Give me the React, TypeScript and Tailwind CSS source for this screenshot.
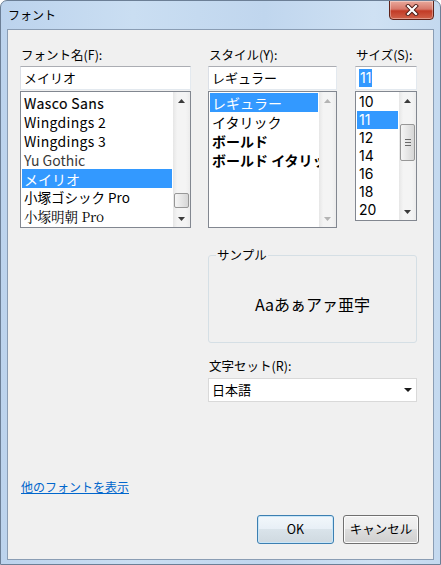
import React from "react";

function Arrow({ dir, disabled }: { dir: "up" | "down"; disabled?: boolean }) {
  const fill = disabled ? "#b4b4b4" : "#3b3b3b";
  return (
    <svg width="7" height="4" viewBox="0 0 7 4">
      {dir === "up" ? (
        <polygon points="3.5,0 7,4 0,4" fill={fill} />
      ) : (
        <polygon points="0,0 7,0 3.5,4" fill={fill} />
      )}
    </svg>
  );
}

function ScrollBar({
  thumbTop,
  thumbHeight,
  grip,
  disabled,
}: {
  thumbTop?: number;
  thumbHeight?: number;
  grip?: boolean;
  disabled?: boolean;
}) {
  return (
    <div className="relative w-[17px] shrink-0 flex flex-col bg-[linear-gradient(to_right,#e6e6e6,#f4f4f4_25%,#f4f4f4_75%,#ececec)]">
      <div className="h-[17px] flex items-center justify-center">
        <Arrow dir="up" disabled={disabled} />
      </div>
      <div className="flex-1" />
      <div className="h-[17px] flex items-center justify-center">
        <Arrow dir="down" disabled={disabled} />
      </div>
      {thumbHeight ? (
        <div
          className="absolute left-[1px] right-[1px] rounded-[2px] border border-[#979797] bg-[linear-gradient(to_right,#f5f5f5,#e6e6e6_50%,#d6d6d6)] flex flex-col items-center justify-center gap-[2px]"
          style={{ top: thumbTop, height: thumbHeight }}
        >
          {grip && (
            <>
              <div className="w-[6px] h-px bg-[#6a6a6a]" />
              <div className="w-[6px] h-px bg-[#6a6a6a]" />
              <div className="w-[6px] h-px bg-[#6a6a6a]" />
            </>
          )}
        </div>
      ) : null}
    </div>
  );
}

type Row = { text: string; cls?: string; sel?: boolean };

function ListBox({
  rows,
  rowH,
  height,
  children,
}: {
  rows: Row[];
  rowH: string;
  height: string;
  children: React.ReactNode;
}) {
  return (
    <div className={`mt-px ${height} border border-[#828790] bg-white flex`}>
      <div className="flex-1 min-w-0 overflow-hidden p-px">
        {rows.map((r) => (
          <div
            key={r.text}
            className={`${rowH} pl-[2px] flex items-center whitespace-nowrap leading-none ${
              r.sel ? "bg-[#3399ff] text-white" : "text-black"
            } ${r.cls ?? "text-[13px]"}`}
          >
            {r.text}
          </div>
        ))}
      </div>
      {children}
    </div>
  );
}

function TextBox({ value, selected }: { value: string; selected?: boolean }) {
  return (
    <div className="h-[24px] border border-[#abadb3] border-l-[#dbdfe6] border-r-[#e3e9ef] border-b-[#e3e9ef] bg-white flex items-center pl-[3px] text-[13px]">
      {selected ? (
        <span className="bg-[#3399ff] text-white px-px leading-[18px] text-[14px] font-['Inter',sans-serif]">{value}</span>
      ) : (
        <span>{value}</span>
      )}
    </div>
  );
}

function Label({ children }: { children: React.ReactNode }) {
  return <div className="text-[12.5px] leading-[16px] text-black pl-px">{children}</div>;
}

const num = "text-[14px] font-['Inter',sans-serif]";

export default function App() {
  return (
    <div className="w-[441px] h-[565px] flex flex-col rounded-t-[7px] border border-[#6c7f96] bg-[linear-gradient(to_right,#bcd3ed,#cadef2_30%,#c0d6ee_60%,#cfe1f3_85%,#c4d9ef)] font-['Noto_Sans_CJK_JP','Noto_Sans',sans-serif] overflow-hidden">
      {/* title bar */}
      <div className="h-[28px] flex items-start justify-between shrink-0">
        <div className="pl-[7px] pt-[5px] text-[12px] leading-[18px] text-black">フォント</div>
        <div className="mr-[6px] mt-[-1px] w-[45px] h-[20px] rounded-b-[4px] border border-[#5e2219] bg-[linear-gradient(to_bottom,#e9a99c,#d7786a_45%,#c23b26_55%,#d0624a)] flex items-center justify-center shadow-[inset_0_0_0_1px_rgba(255,255,255,0.35)]">
          <svg width="14" height="12" viewBox="0 0 14 12">
            <path d="M3 2 L11 10 M11 2 L3 10" stroke="#4a1a14" strokeWidth="4" strokeLinecap="square" />
            <path d="M3 2 L11 10 M11 2 L3 10" stroke="#ffffff" strokeWidth="2.2" strokeLinecap="square" />
          </svg>
        </div>
      </div>

      {/* client area */}
      <div className="mx-[6px] mb-[4px] flex-1 border border-[#8a9db4] bg-[#f0f0f0] flex flex-col pl-[12px] pt-[17px] pb-[15px]">
        <div className="flex">
          <div className="w-[171px]">
            <Label>フォント名(F):</Label>
            <div className="mt-[3px]">
              <TextBox value="メイリオ" />
            </div>
            <ListBox
              rowH="h-[19px]"
              height="h-[137px]"
              rows={[
                { text: "Wasco Sans", cls: "text-[14px] tracking-[0.4px] [-webkit-text-stroke:0.15px_black]" },
                { text: "Wingdings 2", cls: "text-[14px] tracking-[0.3px]" },
                { text: "Wingdings 3", cls: "text-[14px] tracking-[0.3px]" },
                { text: "Yu Gothic", cls: "text-[14px] !text-[#3a3a3a]" },
                { text: "メイリオ", sel: true, cls: "text-[14px]" },
                { text: "小塚ゴシック Pro", cls: "text-[13.5px]" },
                { text: "小塚明朝 Pro", cls: "text-[13.5px] font-['Noto_Serif_CJK_JP','Noto_Sans_CJK_JP',serif]" },
              ]}
            >
              <ScrollBar thumbTop={101} thumbHeight={15} />
            </ListBox>
          </div>

          <div className="w-[129px] ml-[17px]">
            <Label>スタイル(Y):</Label>
            <div className="mt-[3px]">
              <TextBox value="レギュラー" />
            </div>
            <ListBox
              rowH="h-[19px]"
              height="h-[137px]"
              rows={[
                { text: "レギュラー", sel: true, cls: "text-[14px]" },
                { text: "イタリック", cls: "text-[14px]" },
                { text: "ボールド", cls: "text-[14px] font-bold" },
                { text: "ボールド イタリック", cls: "text-[14px] font-bold" },
              ]}
            >
              <ScrollBar disabled />
            </ListBox>
          </div>

          <div className="w-[62px] ml-[18px]">
            <Label>サイズ(S):</Label>
            <div className="mt-[3px]">
              <TextBox value="11" selected />
            </div>
            <ListBox
              rowH="h-[18px]"
              height="h-[130px]"
              rows={[
                { text: "10", cls: num },
                { text: "11", sel: true, cls: num },
                { text: "12", cls: num },
                { text: "14", cls: num },
                { text: "16", cls: num },
                { text: "18", cls: num },
                { text: "20", cls: num },
              ]}
            >
              <ScrollBar thumbTop={32} thumbHeight={37} grip />
            </ListBox>
          </div>
        </div>

        <div className="ml-[188px] w-[209px] mt-[19px]">
          <fieldset className="h-[96px] border border-[#d5dfe5] rounded-[3px] flex items-center justify-center">
            <legend className="ml-[7px] px-px text-[12.5px] leading-[16px] text-black">サンプル</legend>
            <div className="text-[16px] leading-none text-black pt-[2px]">Aaあぁアァ亜宇</div>
          </fieldset>

          <div className="mt-[15px]">
            <Label>文字セット(R):</Label>
          </div>
          <div className="mt-[4px] h-[24px] border border-[#d9d9d9] bg-white flex items-center justify-between pl-[3px] pr-[4px] text-[13px] text-black">
            <span>日本語</span>
            <svg width="8" height="4" viewBox="0 0 8 4">
              <polygon points="0,0 8,0 4,4" fill="#1a1a1a" />
            </svg>
          </div>
        </div>

        <div className="flex-1" />

        <div className="text-[12px] leading-[16px]">
          <a className="underline text-[#0066cc] pl-px">他のフォントを表示</a>
        </div>

        <div className="mt-[20px] flex justify-end gap-[9px] pr-[14px]">
          <button className="w-[77px] h-[29px] rounded-[3px] border border-[#3c7fb1] bg-[linear-gradient(to_bottom,#f2f7fb,#e7eff6_50%,#d9e3ea_50%,#cfd9e0)] shadow-[inset_0_0_0_1px_#c9e6f8] text-[12.5px] text-black">
            OK
          </button>
          <button className="w-[76px] h-[29px] rounded-[3px] border border-[#707070] bg-[linear-gradient(to_bottom,#f2f2f2,#ebebeb_50%,#dddddd_50%,#cfcfcf)] shadow-[inset_0_0_0_1px_#fcfcfc] text-[12.5px] text-black">
            キャンセル
          </button>
        </div>
      </div>
    </div>
  );
}
